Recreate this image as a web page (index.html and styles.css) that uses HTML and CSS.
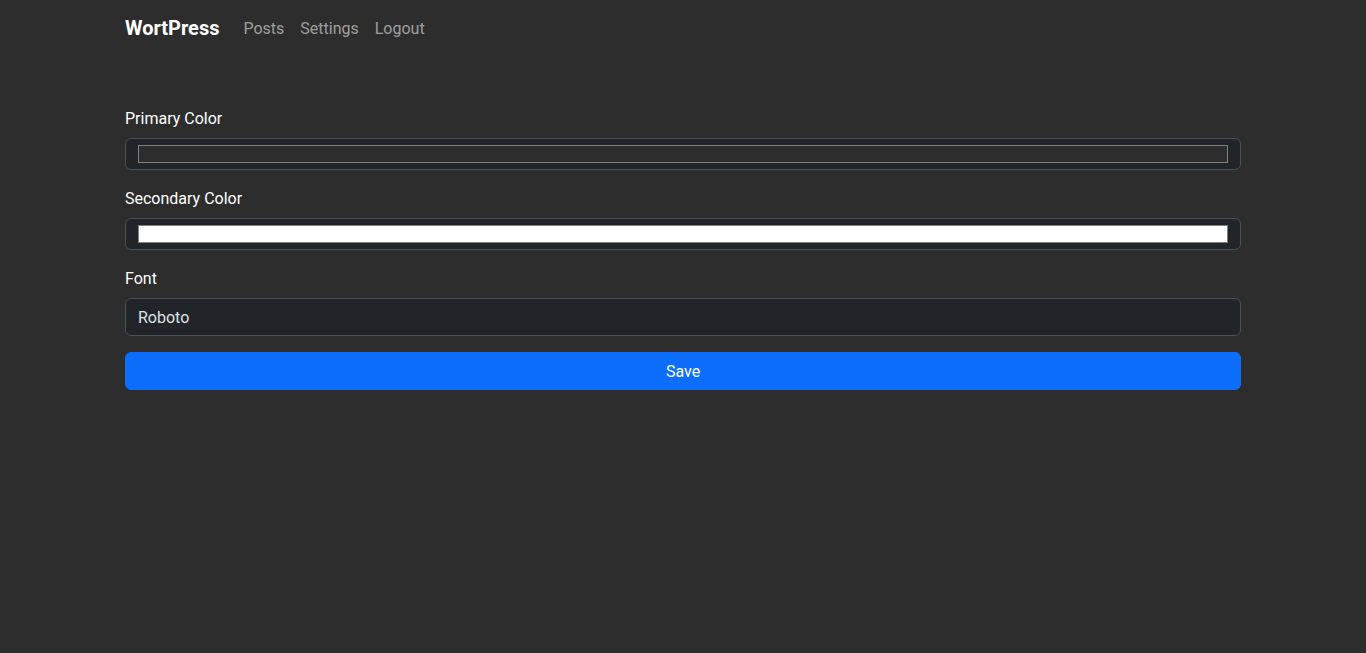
FILE: index.html
```html
<!DOCTYPE html>
<html lang="en">
<head>
  <meta charset="UTF-8" />
  <meta name="viewport" content="width=device-width, initial-scale=1" />
  <title>WortPress - Settings</title>
  <link rel="stylesheet" href="styles.css">
</head>
<body>
  <nav class="navbar">
    <div class="container nav-inner">
      <a class="brand" href="#">WortPress</a>
      <ul class="nav-links">
        <li><a href="#">Posts</a></li>
        <li><a href="#">Settings</a></li>
        <li><a href="#">Logout</a></li>
      </ul>
    </div>
  </nav>

  <main class="container settings">
    <form>
      <div class="field">
        <label for="primaryColor">Primary Color</label>
        <input id="primaryColor" class="control color-control" type="color" value="#2d2d2d" />
      </div>
      <div class="field">
        <label for="secondaryColor">Secondary Color</label>
        <input id="secondaryColor" class="control color-control" type="color" value="#ffffff" />
      </div>
      <div class="field">
        <label for="font">Font</label>
        <input id="font" class="control" type="text" value="Roboto" />
      </div>
      <button type="submit" class="save-btn">Save</button>
    </form>
  </main>
</body>
</html>
```

FILE: styles.css
```css
:root {
  --bg: #2d2d2d;
  --field-bg: #212529;
  --field-border: #495057;
  --text: #dee2e6;
  --blue: #0d6efd;
}
* {
  box-sizing: border-box;
  margin: 0;
  padding: 0;
}
body {
  background: var(--bg);
  color: var(--text);
  font-family: Roboto, "Liberation Sans", Arial, sans-serif;
  font-size: 16px;
  line-height: 1.5;
}
.container {
  width: 1140px;
  margin: 0 auto;
  padding: 0 12px;
}

/* ───── Navbar ───── */
.navbar {
  padding: 8px 0;
}
.nav-inner {
  display: flex;
  align-items: center;
  height: 40.625px;
}
.brand {
  color: #fff;
  font-size: 20px;
  font-weight: 700;
  text-decoration: none;
  margin-right: 16px;
}
.nav-links {
  display: flex;
  list-style: none;
}
.nav-links a {
  display: block;
  padding: 9px 8px 7px;
  color: rgba(255, 255, 255, 0.55);
  text-decoration: none;
}

/* ───── Form ───── */
.settings {
  margin-top: 49px;
}
.field {
  margin-bottom: 16px;
}
.field label {
  display: block;
  color: #fff;
  padding-top: 1px;
  margin-bottom: 7px;
}
.control {
  display: block;
  width: 100%;
  padding: 7px 12px 5px;
  font: inherit;
  color: var(--text);
  background: var(--field-bg);
  border: 1px solid var(--field-border);
  border-radius: 6px;
  outline: none;
}
.color-control {
  height: 32px;
  padding: 6px 12px;
  cursor: pointer;
}
.color-control::-webkit-color-swatch-wrapper {
  padding: 0;
}
.color-control::-webkit-color-swatch {
  border: 1px solid #808080;
  border-radius: 0;
}
.save-btn {
  display: block;
  width: 100%;
  padding: 7px 12px 5px;
  font: inherit;
  color: #fff;
  background: var(--blue);
  border: 1px solid var(--blue);
  border-radius: 6px;
  cursor: pointer;
}
```
